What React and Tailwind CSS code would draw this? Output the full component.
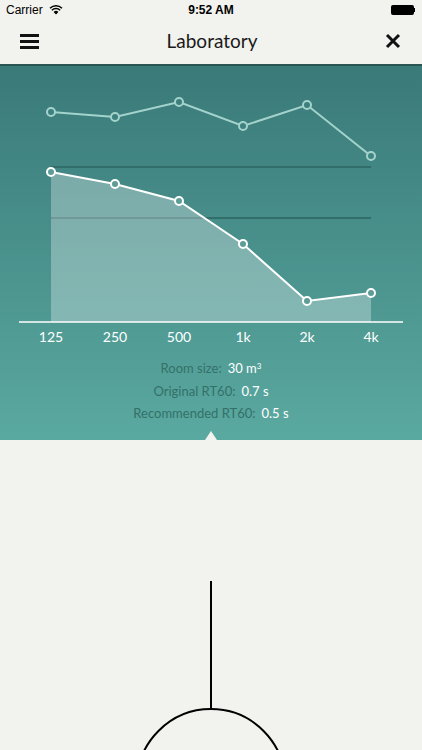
import React from "react";

const xs = [51, 115, 179, 243, 307, 371];
const original = [112, 117, 102, 126, 105, 156];
const recommended = [172, 184, 201, 244, 301, 293];
const freqs = ["125", "250", "500", "1k", "2k", "4k"];

const stats = [
  { label: "Room size:", value: <>30 m<sup className="text-[8px]">3</sup></> },
  { label: "Original RT60:", value: "0.7 s" },
  { label: "Recommended RT60:", value: "0.5 s" },
];

function pts(ys) {
  return ys.map((y, i) => `${xs[i]},${y}`).join(" ");
}

function Chart() {
  return (
    <svg width="422" height="258" viewBox="0 66 422 258" className="block">
      <defs>
        <linearGradient id="bg" x1="0" y1="66" x2="0" y2="440" gradientUnits="userSpaceOnUse">
          <stop offset="0" stopColor="#3a7a79" />
          <stop offset="1" stopColor="#5aa9a0" />
        </linearGradient>
      </defs>
      {/* guide lines */}
      <line x1="51" y1="167" x2="371" y2="167" stroke="#2d6562" strokeWidth="1.5" />
      <line x1="51" y1="218" x2="371" y2="218" stroke="#2d6562" strokeWidth="1.5" />

      {/* recommended area */}
      <polygon points={`${pts(recommended)} 371,322 51,322`} fill="#ffffff" fillOpacity="0.3" />

      {/* original curve */}
      <polyline points={pts(original)} fill="none" stroke="#a3d3cc" strokeWidth="2" />
      {original.map((y, i) => (
        <circle key={i} cx={xs[i]} cy={y} r="4" fill="url(#bg)" stroke="#a3d3cc" strokeWidth="2" />
      ))}

      {/* recommended curve */}
      <polyline points={pts(recommended)} fill="none" stroke="#ffffff" strokeWidth="2" />
      {recommended.map((y, i) => (
        <circle key={i} cx={xs[i]} cy={y} r="4" fill="#5d9d96" stroke="#ffffff" strokeWidth="2" />
      ))}

      {/* axis */}
      <line x1="19" y1="322" x2="403" y2="322" stroke="#ffffff" strokeWidth="1.5" />
    </svg>
  );
}

export default function App() {
  return (
    <div className="w-[422px] h-[750px] overflow-hidden flex flex-col bg-[#f2f2ee] font-['Lato',sans-serif]">
      {/* Status bar */}
      <div className="h-[20px] flex items-center justify-between px-[6px] text-[12px] text-black font-['Liberation_Sans',sans-serif] relative">
        <div className="flex items-center gap-[6px]">
          <span>Carrier</span>
          <svg width="14" height="10" viewBox="0 0 14 10">
            <path d="M7 9.5 L4.6 7 A3.4 3.4 0 0 1 9.4 7 Z" fill="#000" />
            <path d="M2.9 5.3 A5.8 5.8 0 0 1 11.1 5.3" fill="none" stroke="#000" strokeWidth="1.5" />
            <path d="M1 3.3 A8.5 8.5 0 0 1 13 3.3" fill="none" stroke="#000" strokeWidth="1.5" />
          </svg>
        </div>
        <span className="absolute left-0 right-0 text-center font-bold pointer-events-none">9:52 AM</span>
        <div className="flex items-center pr-[1px]">
          <div className="w-[23px] h-[10px] bg-black rounded-[2px]" />
          <div className="w-[1.5px] h-[4px] bg-black" />
        </div>
      </div>

      {/* Nav bar */}
      <div className="h-[46px] flex items-center justify-between px-[20px] border-b-2 border-[#2c5654]">
        <div className="flex flex-col gap-[3px] w-[19px] mt-[-2px]">
          <div className="h-[3px] bg-[#111]" />
          <div className="h-[3px] bg-[#111]" />
          <div className="h-[3px] bg-[#111]" />
        </div>
        <span className="text-[19px] text-[#1a1a1a] mt-[-2px]">Laboratory</span>
        <svg width="16" height="16" viewBox="0 0 16 16" className="mr-[1px] mt-[-2px]">
          <path d="M2 2 L14 14 M14 2 L2 14" stroke="#111" strokeWidth="3" />
        </svg>
      </div>

      {/* Chart panel */}
      <div className="relative h-[374px] bg-linear-to-b from-[#3a7a79] to-[#5aa9a0]">
        <Chart />
        <div className="flex pl-[19px] mt-[4px] text-white text-[14px] leading-[18px]">
          {freqs.map((f) => (
            <span key={f} className="w-[64px] text-center">{f}</span>
          ))}
        </div>
        <div className="mt-[11px] flex flex-col items-center text-[13px] leading-[22.5px]">
          {stats.map((s) => (
            <div key={s.label} className="flex gap-[6px]">
              <span className="text-[#347069]">{s.label}</span>
              <span className="text-white">{s.value}</span>
            </div>
          ))}
        </div>
        <div className="absolute bottom-0 left-[205px] w-0 h-0 border-l-[6px] border-r-[6px] border-b-[9px] border-l-transparent border-r-transparent border-b-[#f2f2ee]" />
      </div>

      {/* Meter */}
      <div className="flex-1">
        <svg width="422" height="310" viewBox="0 440 422 310" className="block">
          <line x1="211" y1="581" x2="211" y2="710" stroke="#000" strokeWidth="2" />
          <circle cx="211" cy="783" r="74" fill="none" stroke="#000" strokeWidth="2" />
        </svg>
      </div>
    </div>
  );
}
